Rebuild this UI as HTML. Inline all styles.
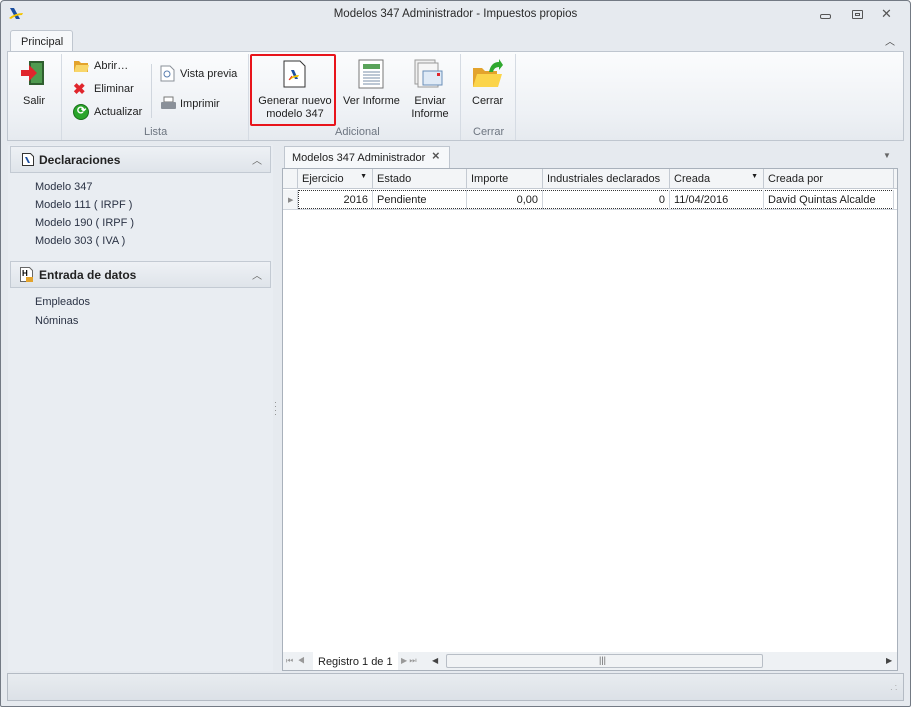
<!DOCTYPE html>
<html><head><meta charset="utf-8"><style>
*{margin:0;padding:0;box-sizing:border-box}
body{width:911px;height:707px;position:relative;overflow:hidden;background:#fff;font-family:"Liberation Sans",sans-serif;font-size:11px;color:#1e1e1e}
.a{position:absolute}
.t{position:absolute;white-space:nowrap}
.gl{position:absolute;top:126px;font-size:11px;color:#6d7580}
.sep{position:absolute;top:54px;width:1px;height:86px;background:#d5dbe3}
.col{position:absolute;top:0;height:20px;border-right:1px solid #c4cad2;padding:4px 0 0 4px}
.cell{position:absolute;top:0;height:19px;border-right:1px solid #d0d5dc;padding:4px 4px 0 4px}
</style></head><body>
<div class="a" style="left:0;top:0;width:911px;height:707px;background:#e6eaef;border:1px solid #737a84;border-radius:4px 4px 2px 2px"></div>
<svg class="a" style="left:8px;top:7px" width="16" height="14" viewBox="0 0 16 14"><path d="M2 1 L6 1 L12 12 L8 12 Z" fill="#1c4fa0"/><path d="M1 11 Q7 6 15 6 L14 8 Q8 8 3 12Z" fill="#f3c400"/></svg>
<div class="t" style="left:0;width:911px;text-align:center;top:8px;font-size:11.5px;color:#2a2a2a">Modelos 347 Administrador - Impuestos propios</div>
<div class="a" style="left:820px;top:14px;width:11px;height:5px;border:1px solid #555;border-radius:2px"></div>
<div class="a" style="left:852px;top:10px;width:11px;height:9px;border:1px solid #555;border-radius:1px"><div style="margin:2px;width:5px;height:3px;border:1px solid #555"></div></div>
<div class="t" style="left:881px;top:6px;font-size:13px;color:#555">✕</div>
<div class="t" style="left:885px;top:33px;font-size:10px;color:#444">︿</div>
<div class="a" style="left:10px;top:30px;width:63px;height:22px;background:#f6f8fa;border:1px solid #bfc6cf;border-bottom:none;border-radius:3px 3px 0 0"></div>
<div class="t" style="left:21px;top:36px;font-size:11px">Principal</div>
<div class="a" style="left:7px;top:51px;width:897px;height:90px;background:linear-gradient(#fbfcfd,#eef1f5 70%,#e6eaef);border:1px solid #bfc6cf"></div>
<div class="sep" style="left:61px"></div>
<div class="sep" style="left:248px"></div>
<div class="sep" style="left:460px"></div>
<div class="sep" style="left:515px"></div>
<div class="a" style="left:151px;top:64px;width:1px;height:54px;background:#d0d6de"></div>
<svg class="a" style="left:19px;top:59px" width="28" height="28" viewBox="0 0 28 28"><rect x="10" y="2" width="15" height="24" fill="#2f5f2f"/><rect x="12" y="4" width="11" height="20" fill="#4f9a4f"/><path d="M2 11 h8 v-5 l8 8 -8 8 v-5 h-8z" fill="#e0252c"/></svg>
<div class="t" style="left:23px;top:95px">Salir</div>
<svg class="a" style="left:73px;top:58px" width="17" height="15"><path d="M1 3 h5 l2 2 h7 v9 h-14z" fill="#e3a32c"/><path d="M3 7 h13 l-2 7 h-13z" fill="#f8d66a"/></svg>
<div class="t" style="left:94px;top:60px">Abrir…</div>
<div class="t" style="left:73px;top:80px;color:#e0252c;font-size:15px;font-weight:bold">✖</div>
<div class="t" style="left:94px;top:83px">Eliminar</div>
<div class="a" style="left:73px;top:104px;width:16px;height:16px;border-radius:50%;background:#2aa52a;border:1px solid #1a6f1a"></div>
<div class="t" style="left:77px;top:104px;color:#fff;font-size:11px;font-weight:bold">⟳</div>
<div class="t" style="left:94px;top:106px">Actualizar</div>
<svg class="a" style="left:160px;top:65px" width="15" height="17"><path d="M1 1h9l4 4v11h-13z" fill="#fff" stroke="#8a9099"/><circle cx="7" cy="9" r="3" fill="none" stroke="#5a7fb0"/></svg>
<div class="t" style="left:180px;top:68px">Vista previa</div>
<svg class="a" style="left:160px;top:96px" width="17" height="15"><rect x="4" y="1" width="9" height="5" fill="#fff" stroke="#777"/><rect x="1" y="6" width="15" height="7" rx="1" fill="#8a9099"/></svg>
<div class="t" style="left:180px;top:98px">Imprimir</div>
<div class="gl" style="left:144px">Lista</div>
<div class="a" style="left:250px;top:54px;width:86px;height:72px;border:2px solid #e8141b;border-radius:2px"></div>
<svg class="a" style="left:283px;top:60px" width="24" height="28"><path d="M1 1h16l5 5v21h-21z" fill="#fff" stroke="#333"/><path d="M8 10 L11 10 L15 19 L12 19Z" fill="#1c4fa0"/><path d="M6 19 Q10 15 16 15 L15 17 Q10 17 7 20Z" fill="#f3c400"/><path d="M6 20 L9 16" stroke="#e0252c"/></svg>
<div class="t" style="left:252px;top:95px;width:86px;text-align:center;line-height:13px">Generar nuevo<br>modelo 347</div>
<svg class="a" style="left:357px;top:59px" width="28" height="30"><rect x="2" y="1" width="24" height="28" fill="#fff" stroke="#777"/><rect x="6" y="5" width="17" height="5" fill="#5aa35a"/><g stroke="#7a8fa8"><line x1="6" y1="13" x2="23" y2="13"/><line x1="6" y1="16" x2="23" y2="16"/><line x1="6" y1="19" x2="23" y2="19"/><line x1="6" y1="22" x2="23" y2="22"/><line x1="6" y1="25" x2="23" y2="25"/></g></svg>
<div class="t" style="left:343px;top:95px">Ver Informe</div>
<svg class="a" style="left:414px;top:59px" width="30" height="30"><rect x="1" y="1" width="20" height="24" fill="#f0f0f0" stroke="#999"/><rect x="4" y="4" width="20" height="24" fill="#f6f6f6" stroke="#999"/><rect x="9" y="12" width="19" height="14" fill="#dfeaf6" stroke="#6a8fb8"/><rect x="23" y="14" width="3" height="3" fill="#e0252c"/></svg>
<div class="t" style="left:410px;top:95px;width:40px;text-align:center;line-height:13px">Enviar<br>Informe</div>
<div class="gl" style="left:335px">Adicional</div>
<svg class="a" style="left:471px;top:58px" width="32" height="32"><path d="M2 10 h9 l3 3 h12 v16 h-24z" fill="#e3a32c"/><path d="M6 16 h25 l-4 13 h-25z" fill="#fbd44a"/><path d="M18 14 Q20 4 28 4 l0 -3 4 6 -4 5 0 -3 Q23 9 22 14z" fill="#2fa82f"/></svg>
<div class="t" style="left:472px;top:95px">Cerrar</div>
<div class="gl" style="left:473px">Cerrar</div>
<div class="a" style="left:8px;top:145px;width:265px;height:526px;background:#e9edf2"></div>
<div class="a" style="left:10px;top:146px;width:261px;height:27px;background:linear-gradient(#eef1f5,#dfe4ea);border:1px solid #c3cad3"></div>
<svg class="a" style="left:22px;top:153px" width="12" height="13"><path d="M0.5 .5h8l3 3v9h-11z" fill="#fff" stroke="#333"/><path d="M3 4l2 0 3 6-2 0z" fill="#1c4fa0"/></svg>
<div class="t" style="left:39px;top:153px;font-size:12px;font-weight:bold;color:#222">Declaraciones</div>
<div class="t" style="left:252px;top:152px;font-size:10px;color:#666">︿</div>
<div class="t" style="left:35px;top:181px;color:#2a3244">Modelo 347</div>
<div class="t" style="left:35px;top:199px;color:#2a3244">Modelo 111 ( IRPF )</div>
<div class="t" style="left:35px;top:217px;color:#2a3244">Modelo 190 ( IRPF )</div>
<div class="t" style="left:35px;top:235px;color:#2a3244">Modelo 303 ( IVA )</div>
<div class="a" style="left:10px;top:261px;width:261px;height:27px;background:linear-gradient(#eef1f5,#dfe4ea);border:1px solid #c3cad3"></div>
<svg class="a" style="left:20px;top:267px" width="14" height="16"><path d="M0.5 .5h9l3 3v11h-12z" fill="#fff" stroke="#666"/><text x="2" y="9" font-size="8" font-family="Liberation Sans" font-weight="bold">H</text><rect x="6" y="10" width="7" height="5" fill="#e3a32c"/></svg>
<div class="t" style="left:39px;top:268px;font-size:12px;font-weight:bold;color:#222">Entrada de datos</div>
<div class="t" style="left:252px;top:267px;font-size:10px;color:#666">︿</div>
<div class="t" style="left:35px;top:296px;color:#2a3244">Empleados</div>
<div class="t" style="left:35px;top:315px;color:#2a3244">Nóminas</div>
<div class="t" style="left:274px;top:400px;color:#888;font-size:9px;line-height:4px">·<br>·<br>·<br>·</div>
<div class="a" style="left:282px;top:145px;width:622px;height:24px;background:#e6eaef"></div>
<div class="a" style="left:284px;top:146px;width:166px;height:23px;background:#f6f8fa;border:1px solid #bfc6cf;border-bottom:none"></div>
<div class="t" style="left:292px;top:152px;font-size:11px">Modelos 347 Administrador</div>
<div class="t" style="left:432px;top:148px;font-size:13px;color:#555;font-weight:bold">×</div>
<div class="t" style="left:883px;top:151px;font-size:8px;color:#666">▼</div>
<div class="a" style="left:282px;top:168px;width:616px;height:503px;background:#fff;border:1px solid #a9b1bb"></div>
<div class="a" style="left:283px;top:169px;width:614px;height:20px;background:#f3f5f7;border-bottom:1px solid #c4cad2">
 <div class="col" style="left:0;width:15px"></div>
 <div class="col" style="left:15px;width:75px">Ejercicio<span style="position:absolute;right:5px;top:4px;font-size:7px">▼</span></div>
 <div class="col" style="left:90px;width:94px">Estado</div>
 <div class="col" style="left:184px;width:76px">Importe</div>
 <div class="col" style="left:260px;width:127px">Industriales declarados</div>
 <div class="col" style="left:387px;width:94px">Creada<span style="position:absolute;right:5px;top:4px;font-size:7px">▼</span></div>
 <div class="col" style="left:481px;width:130px">Creada por</div>
</div>
<div class="a" style="left:283px;top:190px;width:614px;height:20px;border-bottom:1px solid #d0d5dc">
 <div class="cell" style="left:0;width:15px;background:#f3f5f7;color:#888;font-size:7px;padding:6px 0 0 5px">▶</div>
 <div class="a" style="left:15px;top:0;width:596px;height:19px;border:1px dotted #333"></div>
 <div class="cell" style="left:15px;width:75px;text-align:right">2016</div>
 <div class="cell" style="left:90px;width:94px">Pendiente</div>
 <div class="cell" style="left:184px;width:76px;text-align:right">0,00</div>
 <div class="cell" style="left:260px;width:127px;text-align:right">0</div>
 <div class="cell" style="left:387px;width:94px">11/04/2016</div>
 <div class="cell" style="left:481px;width:130px">David Quintas Alcalde</div>
</div>
<div class="a" style="left:283px;top:652px;width:614px;height:18px;background:#eef1f4"></div>
<div class="t" style="left:286px;top:656px;font-size:8px;color:#999">⏮ &nbsp;◀</div>
<div class="a" style="left:313px;top:652px;width:85px;height:18px;background:#fff"></div>
<div class="t" style="left:318px;top:656px;font-size:11px">Registro 1 de 1</div>
<div class="t" style="left:401px;top:656px;font-size:8px;color:#999">▶ ⏭</div>
<div class="t" style="left:432px;top:656px;font-size:8px;color:#444">◀</div>
<div class="a" style="left:446px;top:654px;width:317px;height:14px;background:#f1f3f5;border:1px solid #b8bec6;border-radius:2px"></div>
<div class="t" style="left:599px;top:655px;font-size:9px;color:#666">|||</div>
<div class="t" style="left:886px;top:656px;font-size:8px;color:#444">▶</div>
<div class="a" style="left:7px;top:673px;width:897px;height:28px;background:linear-gradient(#e8ecf0,#dce1e7);border:1px solid #b4bbc4"></div>
<div class="t" style="left:890px;top:684px;font-size:8px;color:#999;line-height:4px">&nbsp;&nbsp;·<br>· ·</div>
</body></html>
